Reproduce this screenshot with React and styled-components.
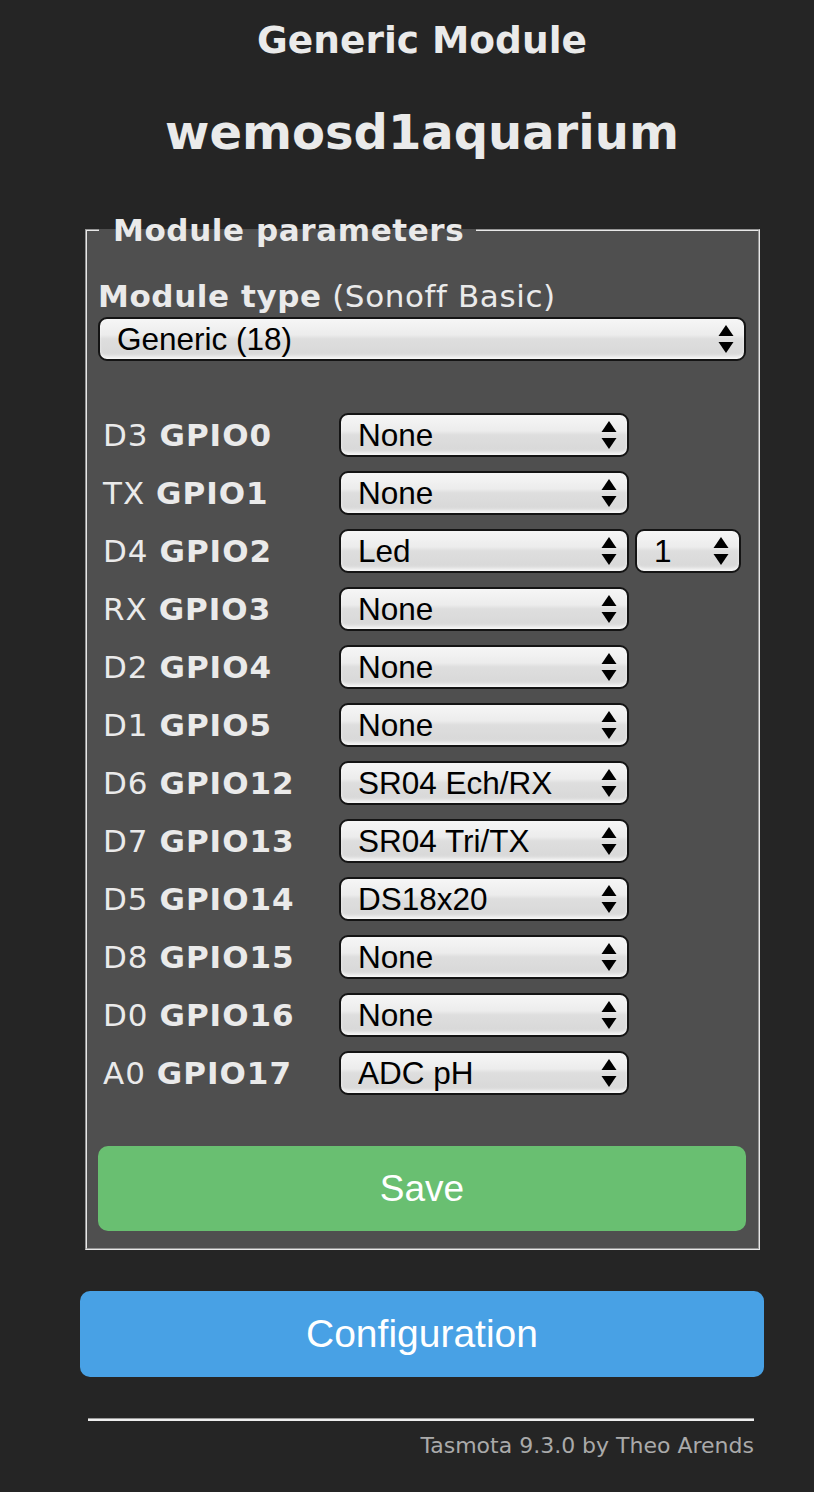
import React from 'react'
import styled, { createGlobalStyle } from 'styled-components'

const GlobalStyle = createGlobalStyle`
  body {
    margin: 0;
    background: #252525;
    color: #eaeaea;
    font-family: "DejaVu Sans", Verdana, sans-serif;
  }
`

const pins = [
  ['D3', 'GPIO0', 'None'],
  ['TX', 'GPIO1', 'None'],
  ['D4', 'GPIO2', 'Led', '1'],
  ['RX', 'GPIO3', 'None'],
  ['D2', 'GPIO4', 'None'],
  ['D1', 'GPIO5', 'None'],
  ['D6', 'GPIO12', 'SR04 Ech/RX'],
  ['D7', 'GPIO13', 'SR04 Tri/TX'],
  ['D5', 'GPIO14', 'DS18x20'],
  ['D8', 'GPIO15', 'None'],
  ['D0', 'GPIO16', 'None'],
  ['A0', 'GPIO17', 'ADC pH'],
]

function Arrows() {
  return (
    <ArrowIcon width="16" height="30" viewBox="0 0 16 30">
      <path d="M8 1 L15.5 12 L0.5 12 Z" fill="#000" />
      <path d="M0.5 18 L15.5 18 L8 29 Z" fill="#000" />
    </ArrowIcon>
  )
}

function Select({ value, width }) {
  return (
    <SelectWrap $width={width}>
      <NativeSelect defaultValue={value}>
        <option>{value}</option>
      </NativeSelect>
      <Arrows />
    </SelectWrap>
  )
}

function App() {
  return (
    <>
      <GlobalStyle />
      <Page>
        <SubTitle>Generic Module</SubTitle>
        <Title>wemosd1aquarium</Title>

        <Params>
          <Legend>Module parameters</Legend>
          <TypeLabel>
            <b>Module type</b> (Sonoff Basic)
          </TypeLabel>
          <Select value="Generic (18)" width="100%" />

          <PinList>
            {pins.map(([pin, gpio, func, idx]) => (
              <PinRow key={gpio}>
                <PinLabel>
                  {pin} <b>{gpio}</b>
                </PinLabel>
                <Select value={func} width="290px" />
                {idx && <Select value={idx} width="106px" />}
              </PinRow>
            ))}
          </PinList>

          <Button $color="#69bf71">Save</Button>
        </Params>

        <ConfigButton $color="#48a1e5">Configuration</ConfigButton>

        <Rule />
        <Footer>Tasmota 9.3.0 by Theo Arends</Footer>
      </Page>
    </>
  )
}

export default App

const Page = styled.div`
  width: 684px;
  margin-left: 80px;
  padding-top: 17px;
  padding-bottom: 30px;
`

const SubTitle = styled.h3`
  margin: 0;
  text-align: center;
  font-size: 37.5px;
  line-height: 46px;
  font-weight: bold;
`

const Title = styled.h2`
  margin: 39px 0 0;
  text-align: center;
  font-size: 48px;
  line-height: 60px;
  font-weight: bold;
`

const Params = styled.fieldset`
  margin: 50px 4px 0 5px;
  padding: 6px 12px 17px 11px;
  background: #4f4f4f;
  border: 2px groove #e8e8e8;
  min-inline-size: 0;
`

const Legend = styled.legend`
  padding: 0 12px 0 14px;
  margin-left: 1px;
  font-size: 31px;
  letter-spacing: 0.6px;
  font-weight: bold;
  line-height: 36px;
`

const TypeLabel = styled.div`
  font-size: 31px;
  letter-spacing: 0.6px;
  line-height: 36px;
  margin-top: 24px;
  margin-bottom: 3px;

  b {
    font-weight: bold;
  }
`

const SelectWrap = styled.div`
  position: relative;
  width: ${p => p.$width};
  height: 44px;
  flex-shrink: 0;
`

const NativeSelect = styled.select`
  appearance: none;
  -webkit-appearance: none;
  width: 100%;
  height: 100%;
  box-sizing: border-box;
  margin: 0;
  padding: 0 40px 0 17px;
  border: 2px solid #141414;
  border-radius: 9px;
  background: linear-gradient(
    to bottom,
    #f6f6f6 0%,
    #ececec 40%,
    #dedede 50%,
    #d9d9d9 85%,
    #ececec 100%
  );
  box-shadow: inset 0 -2px 3px rgba(255, 255, 255, 0.6);
  color: #000;
  font-family: "Liberation Sans", Arial, sans-serif;
  font-size: 31.5px;
  outline: none;
`

const ArrowIcon = styled.svg`
  position: absolute;
  right: 12px;
  top: 7px;
  pointer-events: none;
`

const PinList = styled.div`
  display: flex;
  flex-direction: column;
  gap: 14px;
  margin-top: 52px;
`

const PinRow = styled.div`
  display: flex;
  align-items: center;
  gap: 6px;
`

const PinLabel = styled.div`
  width: 235px;
  padding-left: 5px;
  box-sizing: border-box;
  font-size: 31px;
  letter-spacing: 1px;
  flex-shrink: 0;

  b {
    font-weight: bold;
  }
`

const Button = styled.button`
  display: block;
  width: 100%;
  height: 85px;
  margin-top: 51px;
  border: none;
  border-radius: 10px;
  background: ${p => p.$color};
  color: #fff;
  font-family: "Liberation Sans", Arial, sans-serif;
  font-size: 37px;
  cursor: pointer;
`

const ConfigButton = styled(Button)`
  height: 86px;
  margin-top: 41px;
  font-size: 39px;
`

const Rule = styled.hr`
  margin: 41px 10px 0 8px;
  border: none;
  border-top: 1px solid #9a9a9a;
  border-bottom: 2px solid #eeeeee;
  height: 0;
`

const Footer = styled.div`
  margin-top: 12px;
  padding-right: 10px;
  text-align: right;
  font-size: 22px;
  color: #aaaaaa;
`
